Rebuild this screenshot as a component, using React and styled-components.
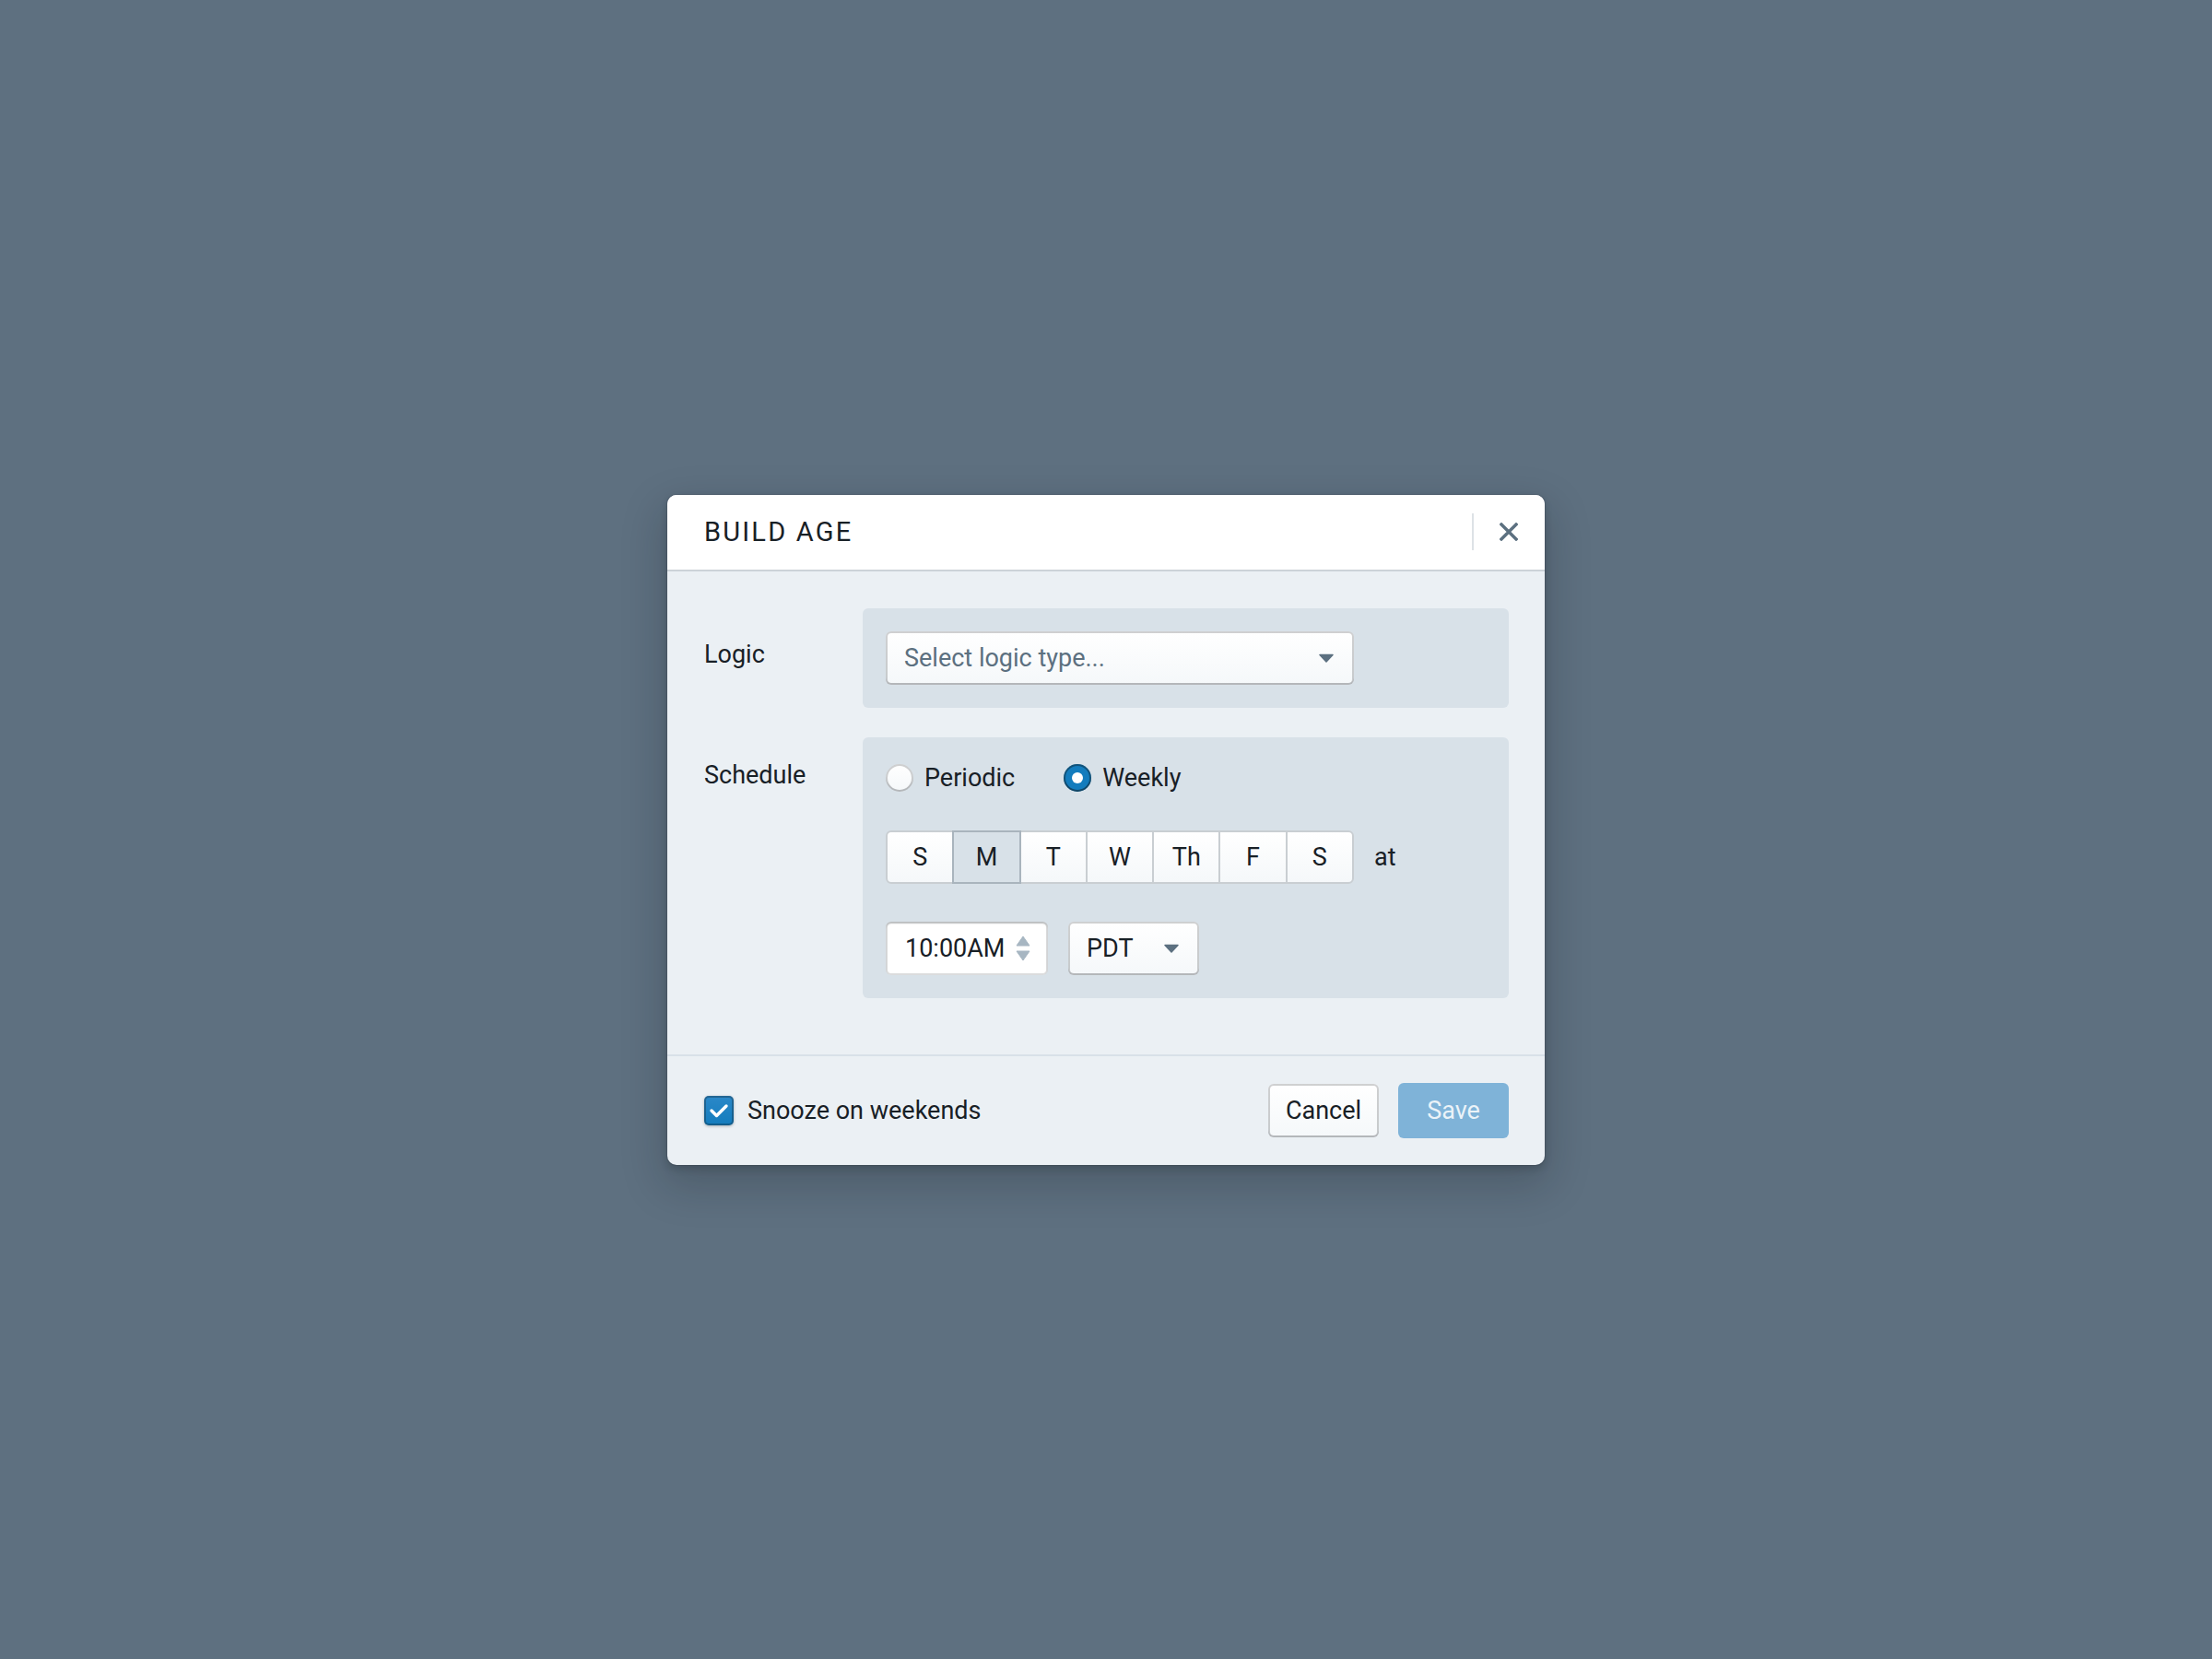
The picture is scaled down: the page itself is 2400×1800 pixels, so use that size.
import styled, { createGlobalStyle } from 'styled-components';

const GlobalStyle = createGlobalStyle`
  body {
    margin: 0;
    background: #5e7080;
    font-family: Roboto, "Liberation Sans", sans-serif;
    color: #182026;
  }
`;

const DAYS = ['S', 'M', 'T', 'W', 'Th', 'F', 'S'];

const Caret = () => (
  <svg width='16' height='10' viewBox='0 0 16 10'>
    <path d='M1 1.5 L15 1.5 L8 9 Z' fill='#5c7080' stroke='#5c7080' strokeWidth='1.5' strokeLinejoin='round' />
  </svg>
);

const Spinner = () => (
  <svg width='16' height='28' viewBox='0 0 16 28'>
    <path d='M8 1 L15 11 L1 11 Z' fill='#a7b6c2' stroke='#a7b6c2' strokeWidth='1' strokeLinejoin='round' />
    <path d='M1 17 L15 17 L8 27 Z' fill='#a7b6c2' stroke='#a7b6c2' strokeWidth='1' strokeLinejoin='round' />
  </svg>
);

const App = () => {
  return (
    <>
      <GlobalStyle />
      <Page>
        <Dialog>
          <Header>
            <Title>BUILD AGE</Title>
            <CloseButton>
              <svg width='20' height='20' viewBox='0 0 20 20'>
                <path d='M2 2 L18 18 M18 2 L2 18' stroke='#5c7080' strokeWidth='3.4' strokeLinecap='square' />
              </svg>
            </CloseButton>
          </Header>

          <Body>
            <Row>
              <Label>Logic</Label>
              <Panel>
                <Select width={508}>
                  <Placeholder>Select logic type...</Placeholder>
                  <Caret />
                </Select>
              </Panel>
            </Row>

            <Row>
              <Label $compact>Schedule</Label>
              <Panel>
                <RadioRow>
                  <RadioOption>
                    <Radio />
                    Periodic
                  </RadioOption>
                  <RadioOption>
                    <Radio $checked />
                    Weekly
                  </RadioOption>
                </RadioRow>

                <DayRow>
                  <DayGroup>
                    {DAYS.map((d, i) => (
                      <DayButton key={i} $active={i === 1}>
                        {d}
                      </DayButton>
                    ))}
                  </DayGroup>
                  <span>at</span>
                </DayRow>

                <TimeRow>
                  <TimeInput>
                    10:00AM
                    <Spinner />
                  </TimeInput>
                  <Select width={142}>
                    <span>PDT</span>
                    <Caret />
                  </Select>
                </TimeRow>
              </Panel>
            </Row>
          </Body>

          <Footer>
            <CheckOption>
              <CheckBox>
                <svg width='22' height='18' viewBox='0 0 22 18'>
                  <path d='M3 9 L8.5 14.5 L19 4' fill='none' stroke='#fff' strokeWidth='3.4' strokeLinecap='round' strokeLinejoin='round' />
                </svg>
              </CheckBox>
              Snooze on weekends
            </CheckOption>
            <Actions>
              <Button>Cancel</Button>
              <Button $primary>Save</Button>
            </Actions>
          </Footer>
        </Dialog>
      </Page>
    </>
  );
};

export default App;

const Page = styled.div`
  min-height: 100vh;
  display: flex;
  align-items: center;
  justify-content: center;
`;

const Dialog = styled.div`
  width: 952px;
  background: #ebf0f4;
  border-radius: 10px;
  box-shadow: 0 0 0 1px rgba(16, 22, 26, 0.1), 0 4px 8px rgba(16, 22, 26, 0.2),
    0 18px 46px 6px rgba(16, 22, 26, 0.2);
  font-size: 27px;
`;

const Header = styled.div`
  height: 81px;
  display: flex;
  align-items: center;
  justify-content: space-between;
  padding: 0 29px 0 40px;
  background: #fff;
  border-radius: 10px 10px 0 0;
  border-bottom: 2px solid #ccd3d8;
`;

const Title = styled.h4`
  margin: 0;
  font-size: 29px;
  font-weight: 400;
  letter-spacing: 2.2px;
  color: #182026;
`;

const CloseButton = styled.div`
  height: 40px;
  display: flex;
  align-items: center;
  padding-left: 28px;
  border-left: 2px solid #dde2e6;
`;

const Body = styled.div`
  padding: 40px 39px 61px 40px;
  display: flex;
  flex-direction: column;
  gap: 32px;
`;

const Row = styled.div`
  display: grid;
  grid-template-columns: 172px 1fr;
`;

const Label = styled.div`
  padding-top: ${(p) => (p.$compact ? '22px' : '28px')};
  line-height: ${(p) => (p.$compact ? '38px' : '44px')};
`;

const Panel = styled.div`
  background: #d8e1e8;
  border-radius: 6px;
  padding: 25px;
`;

const Select = styled.div`
  width: ${(p) => p.width}px;
  height: 58px;
  box-sizing: border-box;
  display: flex;
  align-items: center;
  justify-content: space-between;
  padding: 0 22px 0 20px;
  background: linear-gradient(to bottom, #ffffff, #f5f8fa);
  border-radius: 6px;
  box-shadow: inset 0 0 0 2px rgba(16, 22, 26, 0.2), inset 0 -2px 0 rgba(16, 22, 26, 0.1);
`;

const Placeholder = styled.span`
  color: #5c7080;
`;

const RadioRow = styled.div`
  height: 38px;
  display: flex;
  align-items: center;
  gap: 53px;
`;

const RadioOption = styled.label`
  display: flex;
  align-items: center;
  gap: 12px;
`;

const Radio = styled.span`
  width: 30px;
  height: 30px;
  box-sizing: border-box;
  border-radius: 50%;
  display: flex;
  align-items: center;
  justify-content: center;
  background: ${(p) => (p.$checked ? '#137cbd' : 'linear-gradient(to bottom, #fff, #f5f8fa)')};
  box-shadow: ${(p) =>
    p.$checked
      ? 'inset 0 0 0 2px rgba(16, 22, 26, 0.4), inset 0 -2px 0 rgba(16, 22, 26, 0.2)'
      : 'inset 0 0 0 2px rgba(16, 22, 26, 0.2), inset 0 -2px 0 rgba(16, 22, 26, 0.1)'};

  &::after {
    content: '';
    display: ${(p) => (p.$checked ? 'block' : 'none')};
    width: 12px;
    height: 12px;
    border-radius: 50%;
    background: #fff;
  }
`;

const DayRow = styled.div`
  margin-top: 38px;
  display: flex;
  align-items: center;
  gap: 22px;
`;

const DayGroup = styled.div`
  display: flex;
  width: 508px;
  height: 58px;
`;

const DayButton = styled.div`
  flex: 1;
  display: flex;
  align-items: center;
  justify-content: center;
  box-sizing: border-box;
  margin-left: -2px;
  position: relative;
  z-index: ${(p) => (p.$active ? 1 : 0)};
  background: ${(p) => (p.$active ? '#d8e1e8' : 'linear-gradient(to bottom, #ffffff, #f5f8fa)')};
  border: 2px solid ${(p) => (p.$active ? '#a9b4bd' : '#c9ced2')};

  &:first-child {
    margin-left: 0;
    border-radius: 6px 0 0 6px;
  }
  &:last-child {
    border-radius: 0 6px 6px 0;
  }
`;

const TimeRow = styled.div`
  margin-top: 41px;
  display: flex;
  gap: 22px;
`;

const TimeInput = styled.div`
  width: 176px;
  height: 58px;
  box-sizing: border-box;
  display: flex;
  align-items: center;
  justify-content: space-between;
  padding: 0 19px 0 21px;
  background: #fff;
  border-radius: 6px;
  box-shadow: inset 0 0 0 2px rgba(16, 22, 26, 0.15), inset 0 2px 2px rgba(16, 22, 26, 0.15);
`;

const Footer = styled.div`
  height: 118px;
  border-top: 2px solid #d8e1e8;
  display: flex;
  align-items: center;
  justify-content: space-between;
  padding: 0 39px 0 40px;
`;

const CheckOption = styled.label`
  display: flex;
  align-items: center;
  gap: 15px;
  color: #182026;
`;

const CheckBox = styled.span`
  width: 32px;
  height: 32px;
  border-radius: 5px;
  display: flex;
  align-items: center;
  justify-content: center;
  background: linear-gradient(to bottom, #2b88c8, #137cbd);
  box-shadow: inset 0 0 0 2px rgba(16, 22, 26, 0.3), 0 1px 3px rgba(16, 22, 26, 0.3);
`;

const Actions = styled.div`
  display: flex;
  align-items: center;
  gap: 21px;
`;

const Button = styled.button`
  width: 120px;
  height: ${(p) => (p.$primary ? '60px' : '58px')};
  border: none;
  border-radius: 6px;
  font-family: inherit;
  font-size: 27px;
  color: ${(p) => (p.$primary ? 'rgba(255, 255, 255, 0.85)' : '#182026')};
  background: ${(p) => (p.$primary ? '#7fb3d8' : 'linear-gradient(to bottom, #ffffff, #f5f8fa)')};
  box-shadow: ${(p) =>
    p.$primary ? 'none' : 'inset 0 0 0 2px rgba(16, 22, 26, 0.2), inset 0 -2px 0 rgba(16, 22, 26, 0.1)'};
`;
